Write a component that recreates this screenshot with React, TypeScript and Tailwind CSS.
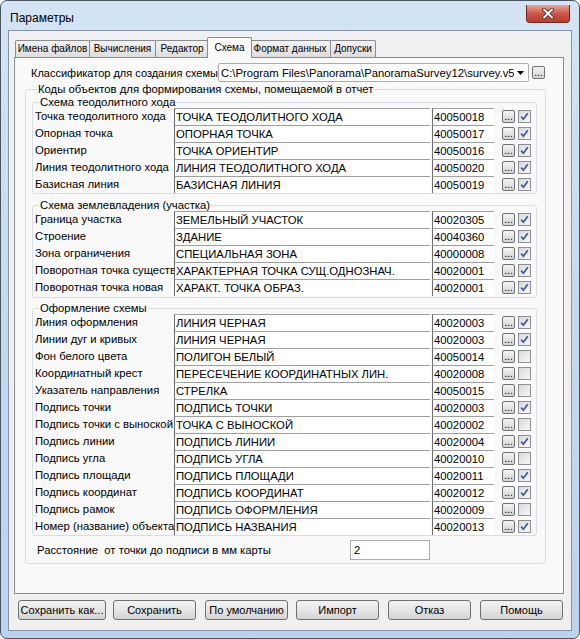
import React from 'react'

type Row = [string, string, string, boolean]

const theodolite: Row[] = [
  ['Точка теодолитного хода', 'ТОЧКА ТЕОДОЛИТНОГО ХОДА', '40050018', true],
  ['Опорная точка', 'ОПОРНАЯ ТОЧКА', '40050017', true],
  ['Ориентир', 'ТОЧКА ОРИЕНТИР', '40050016', true],
  ['Линия теодолитного хода', 'ЛИНИЯ ТЕОДОЛИТНОГО ХОДА', '40050020', true],
  ['Базисная линия', 'БАЗИСНАЯ ЛИНИЯ', '40050019', true],
]

const landplot: Row[] = [
  ['Граница участка', 'ЗЕМЕЛЬНЫЙ УЧАСТОК', '40020305', true],
  ['Строение', 'ЗДАНИЕ', '40040360', true],
  ['Зона ограничения', 'СПЕЦИАЛЬНАЯ ЗОНА', '40000008', true],
  ['Поворотная точка существующая', 'ХАРАКТЕРНАЯ ТОЧКА СУЩ.ОДНОЗНАЧ.', '40020001', true],
  ['Поворотная точка новая', 'ХАРАКТ. ТОЧКА ОБРАЗ.', '40020001', true],
]

const design: Row[] = [
  ['Линия оформления', 'ЛИНИЯ ЧЕРНАЯ', '40020003', true],
  ['Линии дуг и кривых', 'ЛИНИЯ ЧЕРНАЯ', '40020003', true],
  ['Фон белого цвета', 'ПОЛИГОН БЕЛЫЙ', '40050014', false],
  ['Координатный крест', 'ПЕРЕСЕЧЕНИЕ КООРДИНАТНЫХ ЛИН.', '40020008', false],
  ['Указатель направления', 'СТРЕЛКА', '40050015', false],
  ['Подпись точки', 'ПОДПИСЬ ТОЧКИ', '40020003', true],
  ['Подпись точки с выноской', 'ТОЧКА С ВЫНОСКОЙ', '40020002', false],
  ['Подпись линии', 'ПОДПИСЬ ЛИНИИ', '40020004', true],
  ['Подпись угла', 'ПОДПИСЬ УГЛА', '40020010', false],
  ['Подпись площади', 'ПОДПИСЬ ПЛОЩАДИ', '40020011', true],
  ['Подпись координат', 'ПОДПИСЬ КООРДИНАТ', '40020012', true],
  ['Подпись рамок', 'ПОДПИСЬ ОФОРМЛЕНИЯ', '40020009', false],
  ['Номер (название) объекта', 'ПОДПИСЬ НАЗВАНИЯ', '40020013', true],
]

// tab label + fixed width, the active one is wider and raised
const tabs: [string, string][] = [
  ['Имена файлов', 'w-[75px]'],
  ['Вычисления', 'w-[67px]'],
  ['Редактор', 'w-[54px]'],
  ['Схема', 'w-[45px]'],
  ['Формат данных', 'w-[82px]'],
  ['Допуски', 'w-[46px]'],
]

const buttons: [string, string][] = [
  ['Сохранить как...', 'w-[88px] ml-[4px]'],
  ['Сохранить', 'w-[83px] ml-[7px]'],
  ['По умолчанию', 'w-[83px] ml-[9px]'],
  ['Импорт', 'w-[83px] ml-[8px]'],
  ['Отказ', 'w-[83px] ml-[9px]'],
  ['Помощь', 'w-[83px] ml-[9px]'],
]

function Dots() {
  return (
    <span className="flex w-[13px] h-[13px] items-end justify-center rounded-[2px] border border-[#707070] bg-linear-to-b from-[#f4f4f4] to-[#d4d4d4] text-[10px] leading-[8px] pb-[1px]">
      ...
    </span>
  )
}

function Check({ on }: { on: boolean }) {
  return (
    <span className="flex w-[13px] h-[13px] items-center justify-center border border-[#8e8f8f] bg-white">
      <span className="flex w-[11px] h-[11px] items-center justify-center bg-linear-to-br from-[#d6d9de] to-[#f8f8f8]">
        {on && (
          <svg width="9" height="9" viewBox="0 0 9 9">
            <path d="M1.2 4.6 L3.4 7.2 L7.8 1.2" stroke="#3f57a0" strokeWidth="1.7" fill="none" />
          </svg>
        )}
      </span>
    </span>
  )
}

function CodeRow({ row }: { row: Row }) {
  const [label, name, code, on] = row
  return (
    <div className="flex items-center h-[17px] pl-[2px]">
      <div className="w-[139px] shrink-0 overflow-hidden whitespace-nowrap leading-[14px] -mt-[1px]">{label}</div>
      <div className="w-[256px] h-[17px] shrink-0 overflow-hidden whitespace-nowrap bg-white border-t border-l border-t-[#a0a0a0] border-l-[#6d6d6d] leading-[16px] pl-[1px]">
        {name}
      </div>
      <div className="ml-[2px] w-[62px] h-[17px] shrink-0 overflow-hidden whitespace-nowrap bg-white border-t border-l border-t-[#a0a0a0] border-l-[#6d6d6d] leading-[16px] pl-[1px]">
        {code}
      </div>
      <div className="ml-[8px]">
        <Dots />
      </div>
      <div className="ml-[3px]">
        <Check on={on} />
      </div>
    </div>
  )
}

function Group({ title, rows, className }: { title: string; rows: Row[]; className: string }) {
  return (
    <fieldset className={`border border-[#d5dfe5] rounded-[3px] ${className}`}>
      <legend className="ml-[6px] px-[1px] leading-[12px]">{title}</legend>
      {rows.map((r, i) => (
        <CodeRow key={i} row={r} />
      ))}
    </fieldset>
  )
}

function CloseButton() {
  return (
    <div className="flex w-[44px] h-[18px] items-center justify-center rounded-b-[4px] border border-t-0 border-[#6b2a22] bg-linear-to-b from-[#e8a898] via-[#c9574a] to-[#c2392b]">
      <svg width="14" height="11" viewBox="0 0 14 11">
        <path d="M3 1.5 L11 9.5 M11 1.5 L3 9.5" stroke="#4a1c16" strokeWidth="3.6" strokeLinecap="round" />
        <path d="M3 1.5 L11 9.5 M11 1.5 L3 9.5" stroke="#ffffff" strokeWidth="2" strokeLinecap="round" />
      </svg>
    </div>
  )
}

export default function App() {
  return (
    <div className="w-[580px] h-[639px] flex flex-col rounded-[7px] border border-[#4a5360] bg-linear-to-b from-[#d4e4f5] via-[#c4d9f0] to-[#bcd3ee] text-[11.3px] text-black font-['Liberation_Sans',sans-serif] overflow-hidden">
      <div className="h-[29px] shrink-0 flex items-start">
        <span className="pl-[9px] pt-[10px] leading-[14px] text-[12px]">Параметры</span>
        <div className="ml-auto mr-[9px] mt-[4px]">
          <CloseButton />
        </div>
      </div>

      <div className="flex-1 mx-[7px] mb-[7px] border border-[#8393a9] bg-[#f0f0f0] flex flex-col pl-[5px] pr-[7px] pt-[6px]">
        <div className="flex items-end h-[20px] pl-[1px] text-[10px]">
          {tabs.map(([t, w]) =>
            t === 'Схема' ? (
              <div
                key={t}
                className={`${w} relative z-10 -mx-[2px] -mb-[1px] h-[21px] flex justify-center pt-[3px] leading-[14px] whitespace-nowrap border border-b-0 border-[#898c95] rounded-t-[2px] bg-[#f9f9f9]`}
              >
                {t}
              </div>
            ) : (
              <div
                key={t}
                className={`${w} h-[17px] -ml-[1px] first:ml-0 flex justify-center pt-[1px] leading-[14px] whitespace-nowrap border border-b-0 border-[#898c95] rounded-t-[2px] bg-linear-to-b from-[#f2f2f2] to-[#dedede]`}
              >
                {t}
              </div>
            )
          )}
        </div>

        <div className="h-[537px] shrink-0 border border-[#898c95] bg-[#f9f9f9] pt-[5px]">
          <div className="flex items-center h-[19px]">
            <span className="ml-[16px] w-[187px] whitespace-nowrap leading-[14px] text-[11px]">Классификатор для создания схемы</span>
            <div className="flex items-center w-[311px] h-[19px] rounded-[2px] border border-[#acacac] bg-white pl-[2px] pr-[4px]">
              <span className="flex-1 overflow-hidden whitespace-nowrap leading-[14px]">
                C:\Program Files\Panorama\PanoramaSurvey12\survey.v5.rsc
              </span>
              <svg width="7" height="4" viewBox="0 0 7 4" className="ml-[3px] shrink-0">
                <path d="M0 0 L7 0 L3.5 4 Z" fill="#000" />
              </svg>
            </div>
            <div className="ml-[3px]">
              <Dots />
            </div>
          </div>

          <fieldset className="mt-[1px] ml-[10px] mr-[17px] pl-[6px] pr-[8px] pb-[3px] border border-[#d5dfe5] rounded-[3px]">
            <legend className="ml-[5px] px-[1px] leading-[12px]">
              Коды объектов для формирования схемы, помещаемой в отчет
            </legend>
            <Group title="Схема теодолитного хода" rows={theodolite} className="mt-[1px] pb-[0px]" />
            <Group title="Схема землевладения (участка)" rows={landplot} className="mt-[5px] pb-[1px]" />
            <Group title="Оформление схемы" rows={design} className="mt-[4px] pb-[0px]" />
            <div className="flex items-center mt-[4px] h-[20px]">
              <span className="ml-[5px] w-[313px] whitespace-nowrap leading-[14px]">
                Расстояние&nbsp; от точки до подписи в мм карты
              </span>
              <div className="w-[80px] h-[20px] border border-[#abadb3] bg-white pl-[3px] leading-[18px]">2</div>
            </div>
          </fieldset>
        </div>

        <div className="flex mt-[6px] text-[11px]">
          {buttons.map(([t, cls]) => (
            <div
              key={t}
              className={`${cls} h-[20px] flex items-center justify-center overflow-hidden whitespace-nowrap rounded-[3px] border border-[#707070] bg-linear-to-b from-[#f2f2f2] via-[#e6e6e6] to-[#d2d2d2] leading-[14px]`}
            >
              {t}
            </div>
          ))}
        </div>
      </div>
    </div>
  )
}
